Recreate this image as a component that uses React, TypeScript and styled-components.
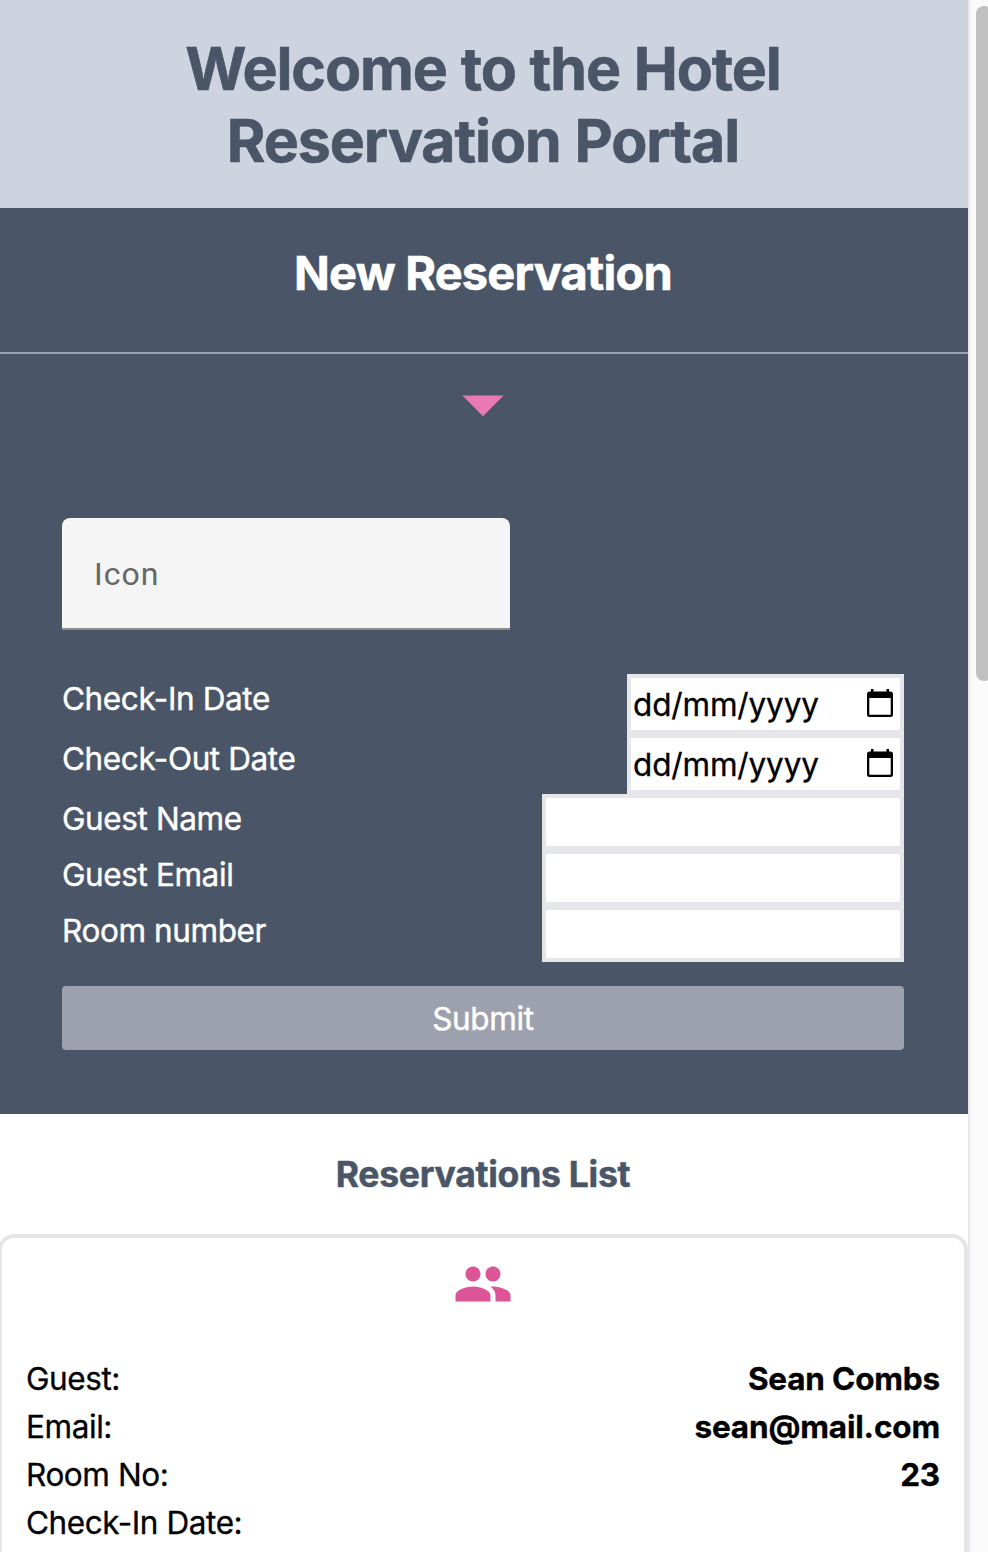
import React from "react";
import styled, { createGlobalStyle } from "styled-components";

const GlobalStyle = createGlobalStyle`
  *, *::before, *::after { box-sizing: border-box; }
  html, body { margin: 0; padding: 0; overflow: hidden; }
  body { background: #ffffff; color: #000000; font-family: Inter, "Liberation Sans", sans-serif; }
  h1, h2, h3, dl, dt, dd { margin: 0; font-weight: inherit; }
`;

const Window = styled.div`
  display: flex;
  width: 988px;
  height: 1552px;
  overflow: hidden;
`;

const Page = styled.main`
  flex: 0 0 970px;
  margin-left: -2px;
`;

const ScrollTrack = styled.div`
  flex: 0 0 20px;
  padding: 6px 0 0 6px;
  border-left: 2px solid #e8e8e8;
  background: #fafafa;
  overflow: hidden;
`;

const ScrollThumb = styled.div`
  width: 16px;
  height: 675px;
  border-radius: 8px;
  background: #c1c1c1;
`;

const Header = styled.header`
  height: 208px;
  padding: 33px 64px 31px;
  background: #cdd4e0;
  text-align: center;
`;

const Title = styled.h1`
  color: #4a5567;
  font-size: 59px;
  font-weight: 700;
  line-height: 72px;
  letter-spacing: -1.1px;
  word-spacing: 1px;
  -webkit-text-stroke: 0.6px currentColor;
`;

const ReservationPanel = styled.section`
  height: 906px;
  background: #4a5567;
  color: #ffffff;
`;

const PanelHeading = styled.div`
  height: 146px;
  padding-top: 32px;
  border-bottom: 2px solid #97a3b8;
  text-align: center;
`;

const PanelTitle = styled.h2`
  font-size: 47px;
  font-weight: 700;
  line-height: 66px;
  letter-spacing: -0.8px;
  -webkit-text-stroke: 0.6px currentColor;
`;

const ArrowRow = styled.div`
  display: flex;
  justify-content: center;
  height: 164px;
  color: #e879b4;
`;

const Form = styled.form`
  padding: 0 64px;
`;

const IconSelect = styled.div`
  width: 448px;
  height: 112px;
  margin-bottom: 44px;
  padding-left: 32px;
  border-bottom: 2px solid #8d8d8d;
  border-radius: 8px 8px 0 0;
  background: #f5f5f5;
  color: #666666;
  font: 400 32px/112px Roboto, sans-serif;
  letter-spacing: 1px;
`;

const Field = styled.div<{ $height: number }>`
  display: flex;
  justify-content: space-between;
  height: ${(p) => p.$height}px;
`;

const Label = styled.label`
  font-size: 31.5px;
  line-height: 50px;
  letter-spacing: -0.4px;
  -webkit-text-stroke: 0.4px currentColor;
`;

const DateBox = styled.div`
  display: flex;
  align-items: center;
  justify-content: space-between;
  width: 277px;
  padding: 0 7px 0 2px;
  border: 4px solid #e5e6ea;
  background: #ffffff;
  color: #000000;
  font-size: 31.5px;
  line-height: 52px;
  letter-spacing: -0.15px;
`;

const DateText = styled.span`
  padding-top: 2px;
  -webkit-text-stroke: 0.3px currentColor;
`;

const TextBox = styled.input`
  width: 362px;
  height: 100%;
  border: 4px solid #e5e6ea;
  border-radius: 0;
  background: #ffffff;
  outline: none;
`;

const Submit = styled.button`
  display: block;
  width: 100%;
  height: 64px;
  margin-top: 24px;
  padding: 0;
  border: 0;
  border-radius: 4px;
  background: #9ca1ad;
  color: #ffffff;
  font: 400 31.5px/66px Inter, sans-serif;
  letter-spacing: -0.35px;
  -webkit-text-stroke: 0.4px currentColor;
`;

const ListTitle = styled.h3`
  height: 120px;
  color: #4a5567;
  font-size: 35.5px;
  font-weight: 700;
  line-height: 121px;
  letter-spacing: -0.25px;
  text-align: center;
  -webkit-text-stroke: 0.5px currentColor;
`;

const Card = styled.article`
  height: 400px;
  padding: 16px 24px;
  border: 4px solid #e5e6ea;
  border-radius: 16px;
`;

const CardIcon = styled.div`
  display: flex;
  justify-content: center;
  height: 100px;
  color: #db5597;
`;

const Detail = styled.div`
  display: flex;
  justify-content: space-between;
  height: 48px;
  font-size: 31.5px;
  line-height: 50px;
  letter-spacing: -0.42px;
  -webkit-text-stroke: 0.3px currentColor;
`;

const DetailValue = styled.dd`
  font-weight: 700;
  letter-spacing: -0.18px;
`;

const CalendarIcon = () => (
  <svg width="26" height="28" viewBox="0 0 26 28" fill="currentColor">
    <path
      fillRule="evenodd"
      d="M4 0h2.500v2.500h13V0H22v2.500h1.500Q26 2.500 26 5v20.500Q26 28 23.500 28h-21Q0 28 0 25.500V5Q0 2.500 2.500 2.500H4zM2.300 9v16.700h21.400V9z"
    />
  </svg>
);

const CalendarButton = styled.span`
  display: flex;
  padding-bottom: 2px;
`;

const dates = ["Check-In Date", "Check-Out Date"];
const texts = ["Guest Name", "Guest Email", "Room number"];
const details = [
  ["Guest:", "Sean Combs"],
  ["Email:", "sean@mail.com"],
  ["Room No:", "23"],
  ["Check-In Date:", ""],
];

export default function App() {
  return (
    <Window>
      <GlobalStyle />
      <Page>
        <Header>
          <Title>
            Welcome to the Hotel
            <br />
            Reservation Portal
          </Title>
        </Header>
        <ReservationPanel>
          <PanelHeading>
            <PanelTitle>New Reservation</PanelTitle>
          </PanelHeading>
          <ArrowRow>
            <svg width="98" height="98" viewBox="0 0 24 24" fill="currentColor">
              <path d="m6.950 10.150 5.050 5.100 5.050-5.100z" />
            </svg>
          </ArrowRow>
          <Form>
            <IconSelect>Icon</IconSelect>
            {dates.map((name) => (
              <Field key={name} $height={60}>
                <Label>{name}</Label>
                <DateBox>
                  <DateText>dd/mm/yyyy</DateText>
                  <CalendarButton>
                    <CalendarIcon />
                  </CalendarButton>
                </DateBox>
              </Field>
            ))}
            {texts.map((name) => (
              <Field key={name} $height={56}>
                <Label>{name}</Label>
                <TextBox aria-label={name} />
              </Field>
            ))}
            <Submit type="button">Submit</Submit>
          </Form>
        </ReservationPanel>
        <ListTitle>Reservations List</ListTitle>
        <Card>
          <CardIcon>
            <svg width="60" height="60" viewBox="0 0 24 24" fill="currentColor">
              <path d="M16 11c1.660 0 2.990-1.340 2.990-3S17.660 5 16 5c-1.660 0-3 1.340-3 3s1.340 3 3 3zm-8 0c1.660 0 2.990-1.340 2.990-3S9.660 5 8 5C6.340 5 5 6.340 5 8s1.340 3 3 3zm0 2c-2.330 0-7 1.170-7 3.500V19h14v-2.500c0-2.330-4.670-3.500-7-3.500zm8 0c-.290 0-.620.020-.970.050 1.160.840 1.970 1.970 1.970 3.450V19h6v-2.500c0-2.330-4.670-3.500-7-3.500z" />
            </svg>
          </CardIcon>
          <dl>
            {details.map(([name, value]) => (
              <Detail key={name}>
                <dt>{name}</dt>
                <DetailValue>{value}</DetailValue>
              </Detail>
            ))}
          </dl>
        </Card>
      </Page>
      <ScrollTrack>
        <ScrollThumb />
      </ScrollTrack>
    </Window>
  );
}
